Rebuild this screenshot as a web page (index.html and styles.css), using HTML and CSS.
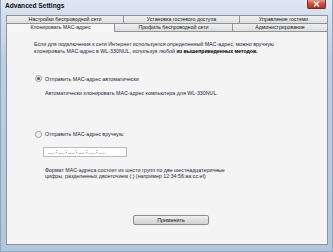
FILE: index.html
```html
<!DOCTYPE html>
<html lang="ru">
<head>
<meta charset="utf-8">
<title>Advanced Settings</title>
<link rel="stylesheet" href="styles.css">
</head>
<body>
<div class="window">
  <div class="titlebar">
    <span class="title">Advanced Settings</span>
    <button class="close" type="button"><svg width="7" height="6" viewBox="0 0 7 6"><path d="M1 0.5 L6 5.5 M6 0.5 L1 5.5" stroke="#fff" stroke-width="1.4"/></svg></button>
  </div>
  <div class="client">
    <div class="tabrow back">
      <div class="tab">Настройки беспроводной сети</div>
      <div class="tab">Установка гостевого доступа</div>
      <div class="tab">Управление гостями</div>
    </div>
    <div class="tabrow front">
      <div class="tab selected">Клонировать MAC-адрес</div>
      <div class="tab">Профиль беспроводной сети</div>
      <div class="tab">Администрирование</div>
    </div>
    <div class="panel">
      <p class="intro">Если для подключения к сети Интернет используется определенный MAC-адрес, можно вручную клонировать MAC-адрес в WL-330NUL, используя любой <span class="strong">из вышеприведенных методов.</span></p>
      <label class="option opt1"><span class="radio checked"></span>Отправить MAC-адрес автоматически</label>
      <p class="desc auto">Автоматически клонировать MAC-адрес компьютера для WL-330NUL.</p>
      <label class="option opt2"><span class="radio"></span>Отправить MAC-адрес вручную:</label>
      <div class="macbox">__:__:__:__:__:__</div>
      <p class="desc fmt">Формат MAC-адреса состоит из шести групп по две шестнадцатеричные цифры, разделенных двоеточием (:) (например 12:34:56:aa:cc:ef)</p>
      <button class="apply" type="button">Применить</button>
    </div>
  </div>
</div>
</body>
</html>
```
FILE: styles.css
```css
html, body {
  margin: 0;
  padding: 0;
}
body {
  width: 333px;
  height: 252px;
  overflow: hidden;
  font-family: "Liberation Sans", Arial, sans-serif;
  color: #1b1f3a;
}
.window {
  width: 333px;
  height: 252px;
  box-sizing: border-box;
  display: flex;
  flex-direction: column;
  padding: 0 5px 6px 5px;
  background: linear-gradient(#dfe8f3 0px, #d4e0ee 14px, #bccee3 60px, #b2c6dd 252px);
  border-left: 1px solid #8ea5c0;
  border-right: 1px solid #8ea5c0;
  border-bottom: 1px solid #8ea5c0;
}
.titlebar {
  height: 15px;
  display: flex;
  align-items: flex-start;
  flex: none;
}
.title {
  font-weight: bold;
  font-size: 6.6px;
  line-height: 12px;
  color: #111;
  margin-left: -1px;
}
.close {
  margin-left: auto;
  margin-right: 1px;
  width: 19px;
  height: 9px;
  padding: 0;
  border: 1px solid #7a2a22;
  border-top: none;
  border-radius: 0 0 2px 2px;
  background: linear-gradient(#e49a8c, #c9503e 50%, #b8311f);
  display: flex;
  align-items: center;
  justify-content: center;
}
.client {
  flex: 1;
  display: flex;
  flex-direction: column;
  margin-right: -1px;
}
.tabrow {
  display: grid;
  height: 8px;
  flex: none;
}
.back {
  grid-template-columns: 117px 116px 1fr;
}
.front {
  grid-template-columns: 108px 118px 1fr;
}
.tab {
  box-sizing: border-box;
  border: 1px solid #8f939b;
  border-right: none;
  border-bottom: none;
  background: linear-gradient(#f0f0f0, #dcdcdc);
  font-size: 5.2px;
  line-height: 7px;
  text-align: center;
  color: #222;
  white-space: nowrap;
  overflow: hidden;
}
.tab:last-child {
  border-right: 1px solid #8f939b;
}
.tab.selected {
  background: #f7f7f7;
  position: relative;
  z-index: 1;
  margin-bottom: -1px;
  height: 9px;
}
.panel {
  flex: 1;
  background: #f4f4f4;
  border: 1px solid #8f939b;
  padding: 9px 0 0 27px;
  display: flex;
  flex-direction: column;
  align-items: flex-start;
}
.intro {
  margin: 0;
  width: 262px;
  font-size: 5.3px;
  line-height: 6.5px;
}
.strong {
  color: #000;
  font-weight: bold;
  letter-spacing: -0.1px;
}
.option {
  display: flex;
  align-items: center;
  gap: 3px;
  height: 7px;
  font-size: 5.3px;
  margin-left: 1px;
}
.opt1 {
  margin-top: 21px;
}
.opt2 {
  margin-top: 34px;
}
.radio {
  width: 5px;
  height: 5px;
  border-radius: 50%;
  border: 1px solid #9aa0a8;
  background: #eef0f2;
  box-sizing: content-box;
  display: flex;
  align-items: center;
  justify-content: center;
}
.radio.checked::after {
  content: "";
  width: 3px;
  height: 3px;
  border-radius: 50%;
  background: #3b5a7a;
}
.desc {
  margin: 0;
  margin-left: 11px;
  font-size: 5.3px;
  line-height: 6.5px;
}
.auto {
  margin-top: 8px;
}
.macbox {
  margin-top: 9px;
  margin-left: 9px;
  width: 84px;
  height: 10px;
  box-sizing: border-box;
  background: #fff;
  border: 1px solid #b8bcc2;
  font-family: "Liberation Mono", monospace;
  font-size: 5.6px;
  line-height: 8px;
  padding-left: 4px;
  color: #222;
}
.fmt {
  margin-top: 10px;
  width: 186px;
}
.apply {
  margin-top: 35px;
  margin-left: 99px;
  width: 76px;
  height: 10px;
  padding: 0;
  border: 1px solid #8a8d92;
  border-radius: 2px;
  background: linear-gradient(#f2f2f2, #dedede 50%, #d2d2d2);
  font-family: "Liberation Sans", Arial, sans-serif;
  font-size: 5.3px;
  line-height: 8px;
  color: #111;
}
```
